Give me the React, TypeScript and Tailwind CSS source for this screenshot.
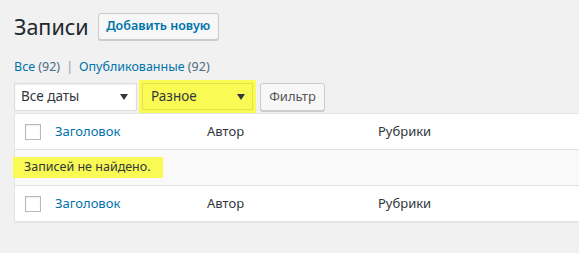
import { useState } from "react";

const font = { fontFamily: '"Segoe UI", "Noto Sans", "Open Sans", sans-serif' };

function Arrow() {
  return (
    <svg width="8" height="6" viewBox="0 0 8 6" className="shrink-0">
      <path d="M0 0 H8 L4 6 Z" fill="#32373c" />
    </svg>
  );
}

function Row() {
  return (
    <div className="flex items-center h-[35px] bg-white pl-[10px]">
      <span className="block w-4 h-4 border border-[#b4b9be] bg-white shadow-[inset_0_1px_2px_rgba(0,0,0,0.07)]" />
      <a className="ml-[14px] w-[152px] text-[#0073aa] text-[13px]">Заголовок</a>
      <span className="w-[171px] text-[#32373c] text-[13px]">Автор</span>
      <span className="text-[#32373c] text-[13px]">Рубрики</span>
    </div>
  );
}

export default function App() {
  const [date] = useState("Все даты");

  return (
    <div className="min-h-[253px] bg-[#f1f1f1] pl-[14px] pt-[13px] text-[13px] text-[#444]" style={font}>
      {/* заголовок страницы */}
      <div className="flex items-center h-[27px]">
        <h1 className="text-[21.5px] font-normal text-[#23282d] leading-none">Записи</h1>
        <button className="ml-[9px] h-[27px] w-[121px] border border-[#ccc] bg-[#f7f7f7] rounded-[3px] text-[12.5px] text-[#0073aa] font-semibold leading-none shadow-[0_1px_0_#ccc]">
          Добавить новую
        </button>
      </div>

      {/* фильтр статусов */}
      <div className="mt-[17px] h-[20px] flex items-center text-[12.5px]">
        <a className="text-[#0073aa]">Все <span className="text-[#4a6b80]">(92)</span></a>
        <span className="mx-[6px] text-[#8aa4b5]">|</span>
        <a className="text-[#0073aa]">Опубликованные <span className="text-[#4a6b80]">(92)</span></a>
      </div>

      {/* выпадающие списки */}
      <div className="mt-[3px] flex items-center h-[33px]">
        <div className="w-[123px] h-[28px] bg-white border border-[#ddd] shadow-[inset_0_1px_2px_rgba(0,0,0,0.07)] flex items-center justify-between pl-[6px] pr-[8px] text-[#32373c] text-[13.5px]">
          <span>{date}</span>
          <Arrow />
        </div>
        <div className="ml-[2px] w-[117px] h-[33px] bg-[#fafa55] p-[3px] flex">
          <div className="flex-1 border border-[#e2e24a] bg-[#fafa55] flex items-center justify-between pl-[8px] pr-[7px] text-[#32373c] text-[13.5px]">
            <span>Разное</span>
            <Arrow />
          </div>
        </div>
        <button className="ml-[4px] h-[28px] w-[65px] border border-[#ccc] bg-[#f7f7f7] rounded-[3px] text-[#555] shadow-[0_1px_0_#ccc] leading-none">
          Фильтр
        </button>
      </div>

      {/* таблица */}
      <div className="bg-white border border-[#e5e5e5] border-r-0 shadow-[0_1px_1px_rgba(0,0,0,0.04)]">
        <div className="border-b border-[#e1e1e1]">
          <Row />
        </div>
        <div className="h-[36px] bg-[#f9f9f9] border-b border-[#e1e1e1] flex items-center">
          <div className="-ml-[2px] h-[21px] w-[150px] bg-[#fafa55] flex items-center pl-[11px] text-[#32373c] text-[12.5px]">
            Записей не найдено.
          </div>
        </div>
        <Row />
      </div>
    </div>
  );
}
